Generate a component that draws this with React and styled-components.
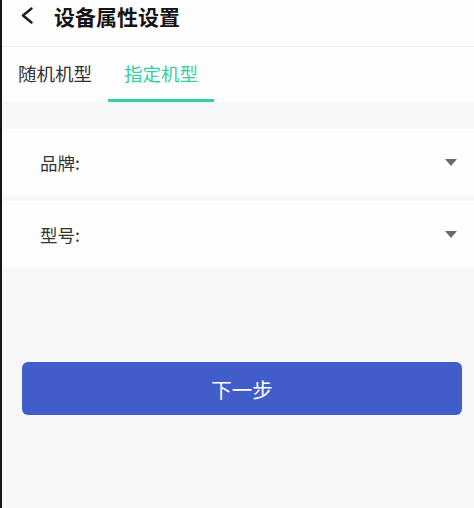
import React, { useState } from "react";
import styled, { createGlobalStyle } from "styled-components";

const Global = createGlobalStyle`
  html, body { margin: 0; padding: 0; background: #f7f6f9; }
  body { font-family: "Noto Sans CJK SC", "Noto Sans", sans-serif; }
  * { box-sizing: border-box; }
`;

const Page = styled.div`
  min-height: 508px;
  display: flex;
  flex-direction: column;
  background: #f7f6f9;
  border-left: 2px solid #161616;
`;

const Header = styled.header`
  height: 47px;
  display: flex;
  align-items: center;
  padding: 0 0 15px 17px;
  background: #fefefe;
  border-bottom: 1px solid #efefef;
`;

const BackButton = styled.button`
  width: 16px;
  height: 18px;
  padding: 0;
  border: none;
  background: none;
  display: flex;
  align-items: center;
  justify-content: center;
  margin-right: 19px;
`;

const Title = styled.h1`
  margin: 0;
  font-size: 21px;
  font-weight: 700;
  color: #141414;
  line-height: 32px;
`;

const TabBar = styled.nav`
  display: flex;
  background: #fefefe;
`;

const Tab = styled.button`
  height: 55px;
  padding: 0 16px;
  border: none;
  border-bottom: 3px solid ${(p) => (p.$active ? "#33cfa1" : "transparent")};
  background: none;
  font-family: inherit;
  font-size: 18.5px;
  line-height: 52px;
  color: ${(p) => (p.$active ? "#33cfa1" : "#333333")};
  cursor: pointer;
`;

const Form = styled.section`
  display: flex;
  flex-direction: column;
  gap: 6px;
  padding-top: 27px;
`;

const SelectRow = styled.div`
  height: 66px;
  display: flex;
  align-items: center;
  justify-content: space-between;
  padding: 0 17px 0 38px;
  background: #fefefe;
`;

const Label = styled.span`
  font-size: 17.5px;
  color: #333333;
`;

const Caret = styled.span`
  width: 0;
  height: 0;
  border-left: 6.5px solid transparent;
  border-right: 6.5px solid transparent;
  border-top: 7px solid #6a6a6a;
`;

const NextButton = styled.button`
  margin: 95px 12px 0 20px;
  height: 53px;
  border: none;
  border-radius: 6px;
  background: #405dc9;
  color: #ffffff;
  font-family: inherit;
  font-size: 20.5px;
  cursor: pointer;
`;

export default function App() {
  const [tab, setTab] = useState(1);
  return (
    <>
      <Global />
      <Page>
        <Header>
          <BackButton aria-label="返回">
            <svg width="14" height="17" viewBox="0 0 14 17">
              <path d="M11.5 1.5 L3 8.5 L11.5 15.5" fill="none" stroke="#1e1e1e" strokeWidth="2.4" strokeLinecap="round" strokeLinejoin="round" />
            </svg>
          </BackButton>
          <Title>设备属性设置</Title>
        </Header>
        <TabBar>
          <Tab $active={tab === 0} onClick={() => setTab(0)}>随机机型</Tab>
          <Tab $active={tab === 1} onClick={() => setTab(1)}>指定机型</Tab>
        </TabBar>
        <Form>
          <SelectRow>
            <Label>品牌:</Label>
            <Caret />
          </SelectRow>
          <SelectRow>
            <Label>型号:</Label>
            <Caret />
          </SelectRow>
        </Form>
        <NextButton>下一步</NextButton>
      </Page>
    </>
  );
}
